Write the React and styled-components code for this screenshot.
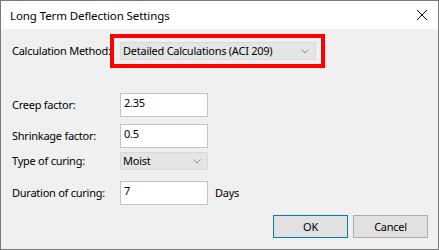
import React from "react";
import styled, { createGlobalStyle } from "styled-components";

const GlobalStyle = createGlobalStyle`
  html, body {
    margin: 0;
    padding: 0;
    background: #ffffff;
  }
  body {
    font-family: "Noto Sans", "Liberation Sans", Arial, sans-serif;
    font-size: 11px;
    letter-spacing: -0.25px;
    color: #000000;
  }
`;

const Window = styled.div`
  box-sizing: border-box;
  width: 439px;
  height: 250px;
  border: 1px solid #7a7a7a;
  display: flex;
  flex-direction: column;
  background: #f0f0f0;
`;

const TitleBar = styled.div`
  height: 28px;
  background: #ffffff;
  display: flex;
  align-items: center;
  justify-content: space-between;
  padding: 0 11px 0 9px;
  flex-shrink: 0;
`;

const Title = styled.span`
  font-size: 11.5px;
  letter-spacing: -0.1px;
  line-height: 16px;
  margin-top: 1px;
`;

const CloseIcon = styled.svg`
  width: 10px;
  height: 10px;
  display: block;
`;

const Body = styled.div`
  flex: 1;
  display: flex;
  flex-direction: column;
  padding: 5px 10px 0 11px;
`;

const Row = styled.div`
  display: flex;
  align-items: center;
  margin-top: ${(p) => p.$gap || 0}px;
`;

const Label = styled.div`
  width: ${(p) => p.$width || 108}px;
  flex-shrink: 0;
  white-space: nowrap;
  line-height: 16px;
`;

const Highlight = styled.div`
  border: 4px solid #ff0000;
  padding: 4px 5px 4px 6px;
  display: flex;
`;

const Combo = styled.div`
  box-sizing: border-box;
  width: ${(p) => p.$width}px;
  height: ${(p) => p.$height || 18}px;
  background: #e5e5e5;
  border: 1px solid #d9d9d9;
  display: flex;
  align-items: center;
  justify-content: space-between;
  padding: 0 6px 0 2px;
  line-height: 16px;
  white-space: nowrap;
`;

const Chevron = styled.svg`
  width: 8px;
  height: 5px;
  display: block;
`;

const TextBox = styled.div`
  box-sizing: border-box;
  width: 88px;
  height: 24px;
  background: #ffffff;
  border: 1px solid #c4c4c4;
  padding: 1px 3px;
  line-height: 16px;
`;

const Unit = styled.span`
  margin-left: 7px;
  line-height: 16px;
`;

const Buttons = styled.div`
  display: flex;
  justify-content: flex-end;
  gap: 5px;
  margin-top: 10px;
`;

const Button = styled.div`
  box-sizing: border-box;
  width: 75px;
  height: 23px;
  display: flex;
  align-items: center;
  justify-content: center;
  background: #e1e1e1;
  border: 1px solid ${(p) => (p.$primary ? "#0078d7" : "#adadad")};
`;

const ChevronDown = () => (
  <Chevron viewBox="0 0 8 5">
    <path d="M0.5 0.5 L4 4 L7.5 0.5" fill="none" stroke="#8c8c8c" strokeWidth="1" />
  </Chevron>
);

export default function App() {
  return (
    <>
      <GlobalStyle />
      <Window>
        <TitleBar>
          <Title>Long Term Deflection Settings</Title>
          <CloseIcon viewBox="0 0 10 10">
            <path d="M0 0 L10 10 M10 0 L0 10" stroke="#000000" strokeWidth="1" />
          </CloseIcon>
        </TitleBar>
        <Body>
          <Row>
            <Label $width={98}>Calculation Method:</Label>
            <Highlight>
              <Combo $width={196}>
                <span>Detailed Calculations (ACI 209)</span>
                <ChevronDown />
              </Combo>
            </Highlight>
          </Row>
          <Row $gap={25}>
            <Label>Creep factor:</Label>
            <TextBox>2.35</TextBox>
          </Row>
          <Row $gap={7}>
            <Label>Shrinkage factor:</Label>
            <TextBox>0.5</TextBox>
          </Row>
          <Row $gap={4}>
            <Label>Type of curing:</Label>
            <Combo $width={88}>
              <span>Moist</span>
              <ChevronDown />
            </Combo>
          </Row>
          <Row $gap={11}>
            <Label>Duration of curing:</Label>
            <TextBox>7</TextBox>
            <Unit>Days</Unit>
          </Row>
          <Buttons>
            <Button $primary>OK</Button>
            <Button>Cancel</Button>
          </Buttons>
        </Body>
      </Window>
    </>
  );
}
